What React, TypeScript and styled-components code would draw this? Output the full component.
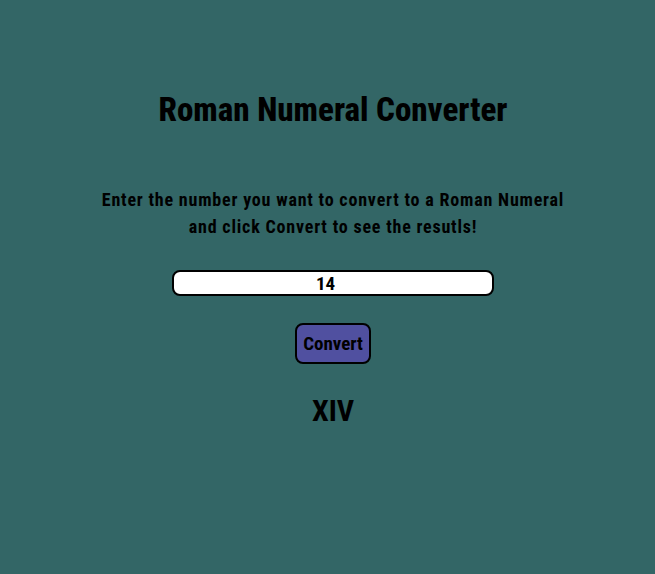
import React, { useState } from "react";
import styled, { createGlobalStyle } from "styled-components";

const Global = createGlobalStyle`
  html, body { margin: 0; padding: 0; background: #336666; }
  body { font-family: Roboto, "Open Sans", sans-serif; font-stretch: 75%; }
`;

const Page = styled.main`
  min-height: 574px;
  background: #336666;
  display: flex;
  flex-direction: column;
  align-items: center;
  padding: 92px 0 0 11px;
  box-sizing: border-box;
  color: #000;
`;

const Title = styled.h1`
  margin: 0;
  font-size: 33px;
  font-weight: 800;
  font-stretch: 75%;
  line-height: 36px;
`;

const Intro = styled.p`
  margin: 58px 0 0;
  font-size: 18px;
  font-weight: 700;
  font-stretch: 75%;
  letter-spacing: 0.8px;
  line-height: 27px;
  text-align: center;
  width: 480px;
`;

const NumberInput = styled.input`
  margin-top: 30px;
  width: 322px;
  height: 26px;
  box-sizing: border-box;
  border: 2px solid #000;
  border-radius: 8px;
  background: #fff;
  text-align: center;
  font-family: inherit;
  font-stretch: 75%;
  font-size: 19px;
  font-weight: 700;
  color: #000;
  padding: 0 1px;
  outline: none;
`;

const ConvertButton = styled.button`
  margin-top: 27px;
  width: 76px;
  height: 41px;
  box-sizing: border-box;
  border: 2px solid #000;
  border-radius: 8px;
  background: #5050a0;
  font-family: inherit;
  font-stretch: 75%;
  font-size: 19px;
  font-weight: 700;
  color: #000;
  padding: 0;
  cursor: pointer;
`;

const Result = styled.div`
  margin-top: 30px;
  font-size: 30px;
  font-weight: 700;
  font-stretch: 75%;
  line-height: 34px;
`;

function toRoman(n: number): string {
  const map: [number, string][] = [
    [1000, "M"], [900, "CM"], [500, "D"], [400, "CD"], [100, "C"], [90, "XC"],
    [50, "L"], [40, "XL"], [10, "X"], [9, "IX"], [5, "V"], [4, "IV"], [1, "I"],
  ];
  let out = "";
  for (const [v, s] of map) {
    while (n >= v) { out += s; n -= v; }
  }
  return out;
}

export default function App() {
  const [value, setValue] = useState("14");
  const [result, setResult] = useState("XIV");
  return (
    <>
      <Global />
      <Page>
        <Title>Roman Numeral Converter</Title>
        <Intro>
          Enter the number you want to convert to a Roman Numeral and click Convert to see the resutls!
        </Intro>
        <NumberInput type="number" value={value} onChange={(e) => setValue(e.target.value)} />
        <ConvertButton onClick={() => setResult(toRoman(parseInt(value, 10) || 0))}>Convert</ConvertButton>
        <Result>{result}</Result>
      </Page>
    </>
  );
}
